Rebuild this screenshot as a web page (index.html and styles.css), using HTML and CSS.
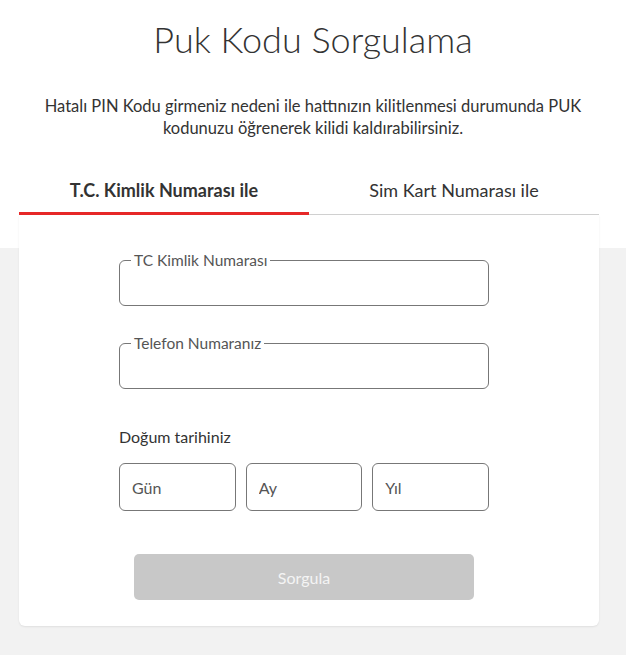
FILE: index.html
```html
<!DOCTYPE html>
<html lang="tr">
<head>
    <meta charset="UTF-8">
    <meta name="viewport" content="width=device-width, initial-scale=1.0">
    <title>Puk Kodu Sorgulama</title>
    <link rel="stylesheet" href="styles.css">
</head>
<body>
    <header class="intro">
        <h1 class="title">Puk Kodu Sorgulama</h1>
        <p class="lead">Hatalı PIN Kodu girmeniz nedeni ile hattınızın kilitlenmesi durumunda PUK<br>kodunuzu öğrenerek kilidi kaldırabilirsiniz.</p>
    </header>

    <main class="panel-area">
        <div class="tabs">
            <div class="tab active">T.C. Kimlik Numarası ile</div>
            <div class="tab">Sim Kart Numarası ile</div>
        </div>

        <form class="card">
            <fieldset class="field">
                <legend>TC Kimlik Numarası</legend>
                <input type="text">
            </fieldset>

            <fieldset class="field">
                <legend>Telefon Numaranız</legend>
                <input type="tel">
            </fieldset>

            <div class="birth-label">Doğum tarihiniz</div>
            <div class="birth-row">
                <input class="date-box" type="text" placeholder="Gün">
                <input class="date-box" type="text" placeholder="Ay">
                <input class="date-box" type="text" placeholder="Yıl">
            </div>

            <button type="button" class="submit" disabled>Sorgula</button>
        </form>
    </main>
</body>
</html>
```

FILE: styles.css
```css
body {
    margin: 0;
    font-family: 'Lato', 'Open Sans', sans-serif;
    color: #333333;
    background-color: #f2f2f2;
    min-height: 100vh;
}

.intro {
    background-color: #ffffff;
    text-align: center;
    padding: 17px 0 0 0;
}

.title {
    margin: 0;
    font-size: 36px;
    font-weight: 300;
    line-height: 44px;
    color: #333333;
}

.lead {
    margin: 34px 0 0 0;
    font-size: 16.5px;
    line-height: 22px;
    color: #333333;
}

/* white above the card top, grey band from there down */
.panel-area {
    background: linear-gradient(to bottom, #ffffff 109px, #f2f2f2 109px);
    padding: 39px 0 28px 19px;
}

.tabs {
    display: flex;
    width: 580px;
}

.tab {
    flex: 1;
    text-align: center;
    font-size: 18px;
    line-height: 24px;
    padding-bottom: 12px;
    color: #333333;
    border-bottom: 1px solid #d0d0d0;
    border-top-right-radius: 6px;
}

.tab.active {
    font-weight: 700;
    border-bottom: 3px solid #e62828;
    padding-bottom: 10px;
}

.card {
    width: 580px;
    box-sizing: border-box;
    background-color: #ffffff;
    border-radius: 0 0 6px 6px;
    box-shadow: 0 1px 2px rgba(0, 0, 0, 0.08);
    padding: 36px 110px 26px 100px;
}

.field {
    margin: 0 0 28px 0;
    padding: 0 12px;
    border: 1px solid #777777;
    border-radius: 6px;
    height: 55px;
    box-sizing: border-box;
}

.field legend {
    padding: 0 3px;
    margin-left: -1px;
    font-size: 15.5px;
    color: #555555;
    line-height: 18px;
}

.field input {
    border: none;
    outline: none;
    width: 100%;
    height: 34px;
    font-family: inherit;
    font-size: 16px;
    background: transparent;
}

.birth-label {
    margin-top: 38px;
    font-size: 16px;
    line-height: 20px;
    color: #333333;
}

.birth-row {
    display: flex;
    gap: 10px;
    margin-top: 16px;
}

.date-box {
    flex: 1;
    min-width: 0;
    height: 48px;
    box-sizing: border-box;
    border: 1px solid #777777;
    border-radius: 6px;
    padding: 0 12px;
    font-family: inherit;
    font-size: 16px;
    color: #333333;
}

.date-box::placeholder {
    color: #555555;
}

.submit {
    display: block;
    width: 340px;
    height: 46px;
    margin: 43px 0 0 15px;
    border: none;
    border-radius: 5px;
    background-color: #c8c8c8;
    color: #f4f4f4;
    font-family: inherit;
    font-size: 16px;
}
```
